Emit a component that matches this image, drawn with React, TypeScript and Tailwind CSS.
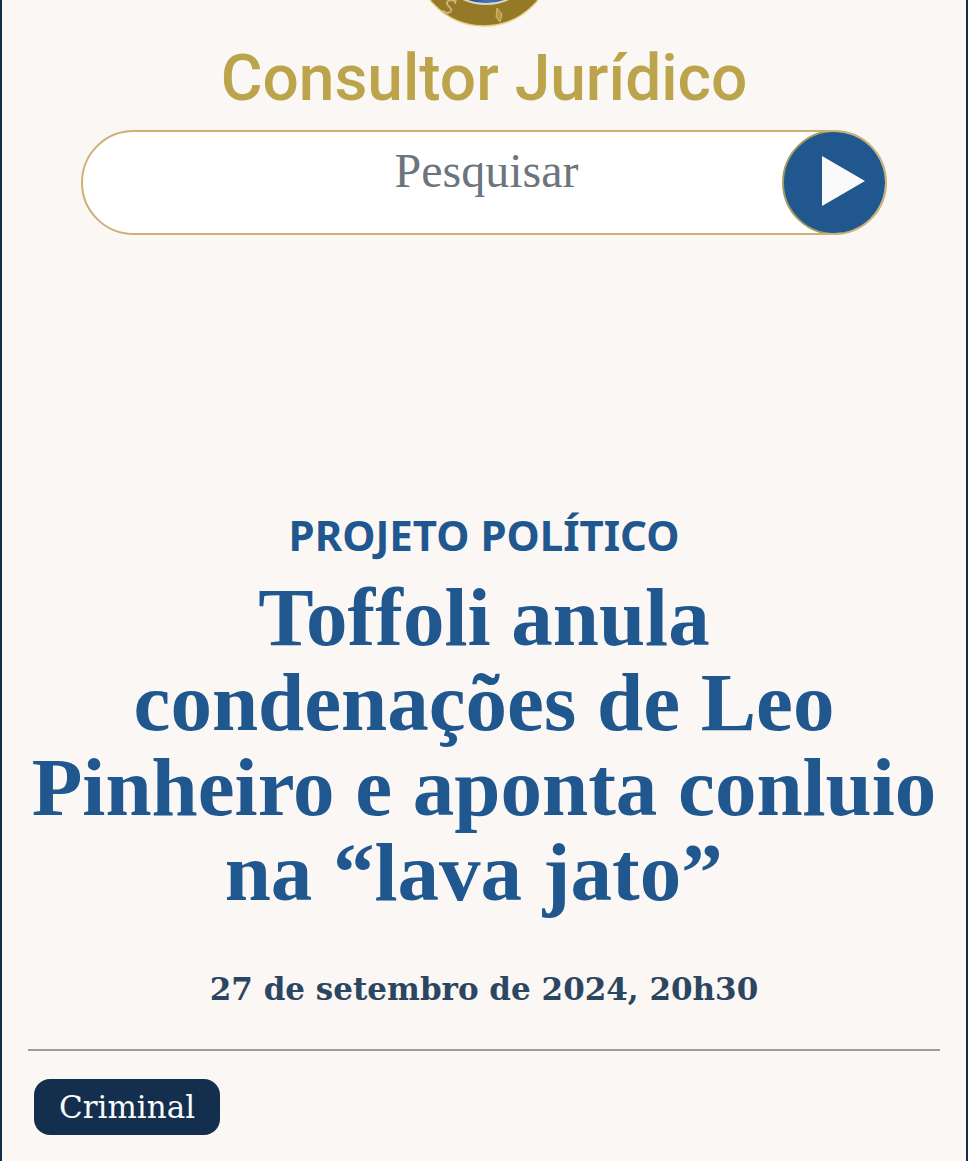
function Seal() {
  return (
    <svg viewBox="0 0 150 28" className="block h-7 w-[150px]" aria-hidden="true">
      <defs>
        <radialGradient id="globe" gradientUnits="userSpaceOnUse" cx="80" cy="-8" r="30">
          <stop offset="0" stopColor="#5f8ed0" />
          <stop offset="0.6" stopColor="#23509f" />
          <stop offset="1" stopColor="#16306f" />
        </radialGradient>
      </defs>
      <circle cx="75" cy="-43" r="69" fill="#967926" stroke="#e8cf88" strokeWidth="1.5" />
      <ellipse cx="77" cy="-42" rx="50" ry="46" fill="url(#globe)" stroke="#d9d5be" strokeWidth="2" />
      <path
        d="M46 1C42-1 37 1 38 4s6 4 4 7-6 2-8 0M47-1l-1 4"
        fill="none"
        stroke="#c9b477"
        strokeWidth="2"
        strokeLinecap="round"
      />
      <path d="M88 8l5 6-2 8-4-5z" fill="#b79a43" stroke="#d5bb67" strokeWidth="1" />
    </svg>
  );
}

export default function App() {
  return (
    <div className="min-h-[1161px] border-x-2 border-[#132f4d] bg-[#faf7f4] px-[26px] pb-[26px]">
      <header className="flex flex-col items-center">
        <Seal />
        <a
          href="#"
          className="flex h-[102px] items-center whitespace-nowrap font-['Roboto','Noto_Sans',sans-serif] text-[64px] font-medium leading-none text-[#bca44c]"
        >
          Consultor Jurídico
        </a>
        <form
          onSubmit={(e) => e.preventDefault()}
          className="flex h-[105px] w-full max-w-[806px] overflow-hidden rounded-full border-2 border-[#cdb174] bg-white"
        >
          <input
            type="search"
            aria-label="Pesquisar"
            placeholder="Pesquisar"
            className="min-w-0 flex-1 bg-transparent pb-6 pl-[108px] text-center font-['Liberation_Serif',serif] text-[48px] text-[#6c757d] outline-none placeholder:text-[#6c757d] [&::-webkit-search-cancel-button]:hidden"
          />
          <button
            type="submit"
            aria-label="Buscar"
            className="-my-0.5 -mr-0.5 flex size-[105px] shrink-0 items-center justify-center rounded-full border-2 border-[#a39d62] bg-[#20578f]"
          >
            <svg viewBox="0 0 105 105" className="size-[105px] shrink-0" aria-hidden="true">
              <path d="M40 26v50l43-25z" fill="#fafafa" />
            </svg>
          </button>
        </form>
      </header>
      <main>
        <article className="pt-[272px] text-center text-[#20578f]">
          <p className="font-['Noto_Sans',sans-serif] text-[42px] font-bold leading-[56px]">PROJETO POLÍTICO</p>
          <h1 className="mt-3 whitespace-nowrap font-['Liberation_Serif',serif] text-[83px] font-bold leading-[85px]">
            Toffoli anula
            <br />
            condenações de Leo
            <br />
            Pinheiro e aponta conluio
            <br />
            na “lava jato”&nbsp;
          </h1>
          <time
            dateTime="2024-09-27T20:30"
            className="mt-[50px] block font-['DejaVu_Serif',serif] text-[31px] font-bold leading-[48px] text-[#2c4661]"
          >
            27 de setembro de 2024, 20h30
          </time>
        </article>
        <hr className="mt-9 border-t-2 border-[#9f9b98]" />
        <a
          href="#"
          className="ml-1.5 mt-7 inline-flex h-14 items-center rounded-2xl bg-[#132f4d] px-[25px] font-['DejaVu_Serif',serif] text-[31px] text-[#fafafa]"
        >
          Criminal
        </a>
      </main>
    </div>
  );
}
